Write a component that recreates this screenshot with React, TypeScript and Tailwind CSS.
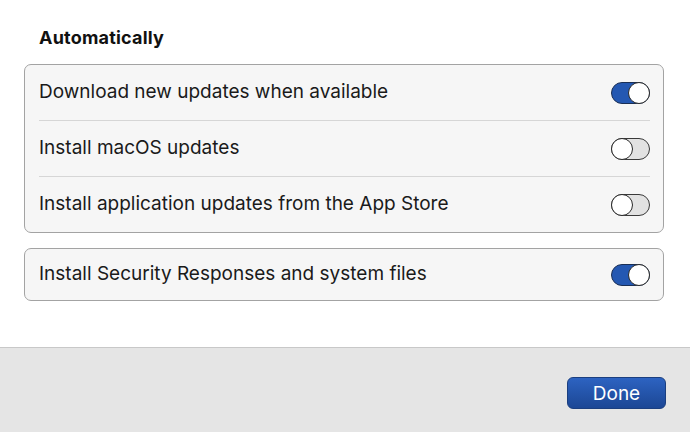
import React from "react";

const Toggle = ({ on }: { on: boolean }) => {
  return (
    <div
      className={`relative w-[39px] h-[22px] rounded-full border ${
        on ? "bg-[#2458b2] border-[#1a2f55]" : "bg-[#e2e2e2] border-[#3a3a3a]"
      }`}
    >
      <div
        className={`absolute top-[-1px] w-[22px] h-[22px] rounded-full bg-white border border-[#2a2a2a] ${
          on ? "right-[-1px]" : "left-[-1px]"
        }`}
      />
    </div>
  );
};

const Row = ({ label, on, divider, tall = true }: { label: string; on: boolean; divider?: boolean; tall?: boolean }) => {
  return (
    <div className="ml-[14px] mr-[13px]">
      <div className={`${tall ? "h-[55px]" : "h-[51px]"} flex items-center justify-between`}>
        <span className="text-[19px] text-[#1a1a1a]">{label}</span>
        <Toggle on={on} />
      </div>
      {divider && <div className="h-px bg-[#d6d6d6]" />}
    </div>
  );
};

export default function App() {
  return (
    <div
      className="w-[690px] h-[432px] flex flex-col bg-white overflow-hidden"
      style={{ fontFamily: "Inter, 'Liberation Sans', Arial, sans-serif" }}
    >
      <div className="flex-1 pl-[24px] pr-[26px] pt-[27px]">
        <h2 className="pl-[15px] text-[18px] font-bold text-[#111] leading-[22px] tracking-[0.2px]">Automatically</h2>
        <div className="mt-[15px] rounded-[7px] border border-[#a3a3a3] bg-[#f6f6f6]">
          <Row label="Download new updates when available" on divider />
          <Row label="Install macOS updates" on={false} divider />
          <Row label="Install application updates from the App Store" on={false} />
        </div>
        <div className="mt-[15px] rounded-[7px] border border-[#a3a3a3] bg-[#f6f6f6]">
          <Row label="Install Security Responses and system files" on tall={false} />
        </div>
      </div>
      <div className="h-[85px] border-t border-[#c8c8c8] bg-[#e5e5e5] flex items-start justify-end pr-[24px] pt-[29px]">
        <button className="w-[99px] h-[32px] rounded-[6px] border border-[#1b3f80] bg-gradient-to-b from-[#2d63c1] to-[#1c4795] text-white text-[19px] leading-none">
          Done
        </button>
      </div>
    </div>
  );
}
